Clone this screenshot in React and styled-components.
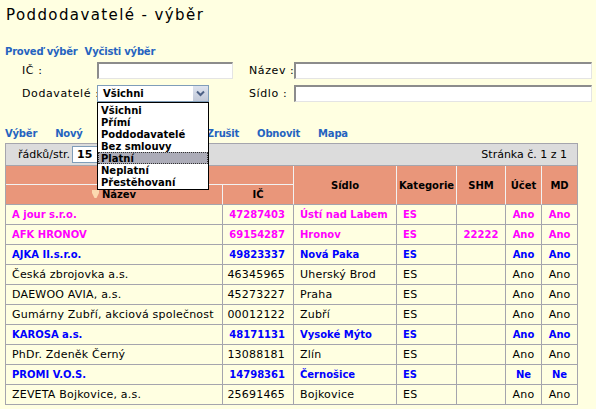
import React from 'react'
import styled, { createGlobalStyle } from 'styled-components'

const GlobalStyle = createGlobalStyle`
  html, body {
    margin: 0;
    padding: 0;
    background: #ffffe1;
  }
  body {
    font-family: "DejaVu Sans", Verdana, sans-serif;
    font-size: 11px;
    color: #000;
  }
`

const Page = styled.div`
  width: 596px;
  height: 409px;
  overflow: hidden;
  position: relative;
`

const Title = styled.h1`
  margin: 0;
  padding: 5px 0 0 6px;
  height: 25px;
  line-height: 20px;
  font-size: 15px;
  font-weight: normal;
  letter-spacing: 1.4px;
`

const Links = styled.div`
  display: flex;
  gap: 7px;
  margin-top: 15px;
  padding-left: 5px;
  height: 14px;
  line-height: 14px;
`

const Link = styled.a`
  color: #2563c0;
  font-weight: bold;
  font-size: 10px;
  letter-spacing: -0.2px;
  text-decoration: none;
  cursor: pointer;
`

const Form = styled.div`
  display: grid;
  grid-template-columns: 75px 136px 16px 45px 298px;
  grid-auto-rows: 17px;
  row-gap: 6px;
  align-items: center;
  margin-top: 3px;
  padding-left: 22px;
`

const Label = styled.label`
  grid-column: ${p => p.col};
  letter-spacing: 0.6px;
  white-space: nowrap;
`

const TextInput = styled.div`
  grid-column: ${p => p.col};
  box-sizing: border-box;
  height: 17px;
  background: #fff;
  border-style: solid;
  border-width: 2px 1px 1px 2px;
  border-color: #8c8c8c #e4e4e4 #e4e4e4 #8c8c8c;
`

const SelectWrap = styled.div`
  grid-column: 2;
  position: relative;
  width: 112px;
  height: 17px;
`

const SelectBox = styled.div`
  box-sizing: border-box;
  height: 17px;
  display: flex;
  align-items: center;
  justify-content: space-between;
  border: 1px solid #7f9db9;
  background: #fff;
  padding-left: 5px;
  font-weight: bold;
  font-size: 10px;
`

const SelectButton = styled.div`
  width: 15px;
  height: 15px;
  display: flex;
  align-items: center;
  justify-content: center;
  background: linear-gradient(#dde3ef, #c2c9d8);
`

const Dropdown = styled.ul`
  position: absolute;
  top: 17px;
  left: 0;
  z-index: 10;
  box-sizing: border-box;
  width: 112px;
  margin: 0;
  padding: 1px 0;
  list-style: none;
  background: #fff;
  border: 1px solid #000;
`

const Option = styled.li`
  box-sizing: border-box;
  height: 12px;
  line-height: 11px;
  padding-left: 2px;
  font-weight: bold;
  font-size: 10px;
  background: ${p => (p.active ? '#acacb8' : 'transparent')};
  border: 1px ${p => (p.active ? 'dotted #333' : 'solid transparent')};
`

const Toolbar = styled.div`
  display: flex;
  gap: 18px;
  margin-top: 25px;
  padding-left: 5px;
  height: 14px;
  line-height: 14px;
`

const Table = styled.table`
  margin: 2px 0 0 5px;
  width: 573px;
  table-layout: fixed;
  border-collapse: separate;
  border-spacing: 0;
  border-left: 1px solid #a5a5ad;
  border-top: 1px solid #a5a5ad;
`

const BarCell = styled.td`
  height: 21px;
  padding: 0 10px 0 12px;
  background: #dcdcdc;
  border-right: 1px solid #a5a5ad;
  border-bottom: 1px solid #a5a5ad;
`

const Bar = styled.div`
  display: flex;
  align-items: center;
  justify-content: space-between;
`

const PerPage = styled.div`
  display: flex;
  align-items: center;
  gap: 2px;
`

const SmallInput = styled.div`
  box-sizing: border-box;
  width: 40px;
  height: 17px;
  line-height: 15px;
  padding-left: 4px;
  background: #fff;
  border: 1px solid #7f9db9;
  font-weight: bold;
  font-size: 11px;
`

const Head = styled.th`
  height: ${p => p.h || 18}px;
  padding: 0;
  background: #e9967a;
  font-weight: bold;
  font-size: 10px;
  text-align: center;
  vertical-align: middle;
  border-right: 1px solid ${p => (p.last ? '#a5a5ad' : '#f2f2f2')};
  border-bottom: 1px solid ${p => (p.bottom ? '#a5a5ad' : '#f2f2f2')};
`

const HeadInner = styled.span`
  display: inline-flex;
  align-items: center;
  gap: 3px;
`

const Cell = styled.td`
  height: 19px;
  padding: 0 ${p => (p.align === 'right' ? '8px' : '0')} 0 ${p => (p.align === 'left' ? '6px' : '0')};
  text-align: ${p => p.align || 'left'};
  white-space: nowrap;
  overflow: hidden;
  border-right: 1px solid #a5a5ad;
  border-bottom: 1px solid #a5a5ad;
  background: #ffffe1;
  color: ${p => (p.tone === 'pink' ? '#ff00ff' : p.tone === 'blue' ? '#0000ff' : '#000')};
  font-weight: ${p => (p.tone ? 'bold' : 'normal')};
  font-size: ${p => (p.tone ? '10px' : '11px')};
  letter-spacing: ${p => (p.tone ? '0' : '0.2px')};
`

const SortIcon = () => (
  <svg width="7" height="8" viewBox="0 0 7 8">
    <path d="M0 0 H7 V3 L4.5 8 H2.5 L0 3 Z" fill="#fcd9b0" />
  </svg>
)

const Chevron = () => (
  <svg width="9" height="7" viewBox="0 0 9 7">
    <path d="M1 1.5 L4.5 5 L8 1.5" fill="none" stroke="#4d6185" strokeWidth="2" />
  </svg>
)

const options = ['Všichni', 'Přímí', 'Poddodavatelé', 'Bez smlouvy', 'Platní', 'Neplatní', 'Přestěhovaní']

const rows = [
  ['A jour s.r.o.', '47287403', 'Ústí nad Labem', 'ES', '', 'Ano', 'Ano', 'pink'],
  ['AFK HRONOV', '69154287', 'Hronov', 'ES', '22222', 'Ano', 'Ano', 'pink'],
  ['AJKA II.s.r.o.', '49823337', 'Nová Paka', 'ES', '', 'Ano', 'Ano', 'blue'],
  ['Česká zbrojovka a.s.', '46345965', 'Uherský Brod', 'ES', '', 'Ano', 'Ano'],
  ['DAEWOO AVIA, a.s.', '45273227', 'Praha', 'ES', '', 'Ano', 'Ano'],
  ['Gumárny Zubří, akciová společnost', '00012122', 'Zubří', 'ES', '', 'Ano', 'Ano'],
  ['KAROSA a.s.', '48171131', 'Vysoké Mýto', 'ES', '', 'Ano', 'Ano', 'blue'],
  ['PhDr. Zdeněk Černý', '13088181', 'Zlín', 'ES', '', 'Ano', 'Ano'],
  ['PROMI V.O.S.', '14798361', 'Černošice', 'ES', '', 'Ne', 'Ne', 'blue'],
  ['ZEVETA Bojkovice, a.s.', '25691465', 'Bojkovice', 'ES', '', 'Ano', 'Ano'],
]

const colWidths = [217, 71, 103, 60, 49, 36, 36]

const App = () => (
  <Page>
    <GlobalStyle />
    <Title>Poddodavatelé - výběr</Title>
    <Links>
      <Link>Proveď výběr</Link>
      <Link>Vyčisti výběr</Link>
    </Links>
    <Form>
      <Label col={1}>IČ :</Label>
      <TextInput col={2} />
      <Label col={4}>Název :</Label>
      <TextInput col={5} />
      <Label col={1}>Dodavatelé :</Label>
      <SelectWrap>
        <SelectBox>
          Všichni
          <SelectButton><Chevron /></SelectButton>
        </SelectBox>
        <Dropdown>
          {options.map(o => (
            <Option key={o} active={o === 'Platní'}>{o}</Option>
          ))}
        </Dropdown>
      </SelectWrap>
      <Label col={4}>Sídlo :</Label>
      <TextInput col={5} />
    </Form>
    <Toolbar>
      <Link>Výběr</Link>
      <Link>Nový</Link>
      <Link>Kopie</Link>
      <Link>Oprava</Link>
      <Link>Zrušit</Link>
      <Link>Obnovit</Link>
      <Link>Mapa</Link>
    </Toolbar>
    <Table>
      <colgroup>
        {colWidths.map((w, i) => <col key={i} style={{ width: w }} />)}
      </colgroup>
      <tbody>
        <tr>
          <BarCell colSpan={7}>
            <Bar>
              <PerPage>řádků/str. <SmallInput>15</SmallInput></PerPage>
              <span>Stránka č. 1 z 1</span>
            </Bar>
          </BarCell>
        </tr>
        <tr>
          <Head colSpan={2} h={18} />
          <Head rowSpan={2} bottom>Sídlo</Head>
          <Head rowSpan={2} bottom>Kategorie</Head>
          <Head rowSpan={2} bottom>SHM</Head>
          <Head rowSpan={2} bottom>Účet</Head>
          <Head rowSpan={2} bottom last>MD</Head>
        </tr>
        <tr>
          <Head h={19} bottom>
            <HeadInner><SortIcon />Název</HeadInner>
          </Head>
          <Head h={19} bottom>IČ</Head>
        </tr>
        {rows.map(r => (
          <tr key={r[1]}>
            <Cell align="left" tone={r[7]}>{r[0]}</Cell>
            <Cell align="right" tone={r[7]}>{r[1]}</Cell>
            <Cell align="left" tone={r[7]}>{r[2]}</Cell>
            <Cell align="left" tone={r[7]}>{r[3]}</Cell>
            <Cell align="center" tone={r[7]}>{r[4]}</Cell>
            <Cell align="center" tone={r[7]}>{r[5]}</Cell>
            <Cell align="center" tone={r[7]}>{r[6]}</Cell>
          </tr>
        ))}
      </tbody>
    </Table>
  </Page>
)

export default App
